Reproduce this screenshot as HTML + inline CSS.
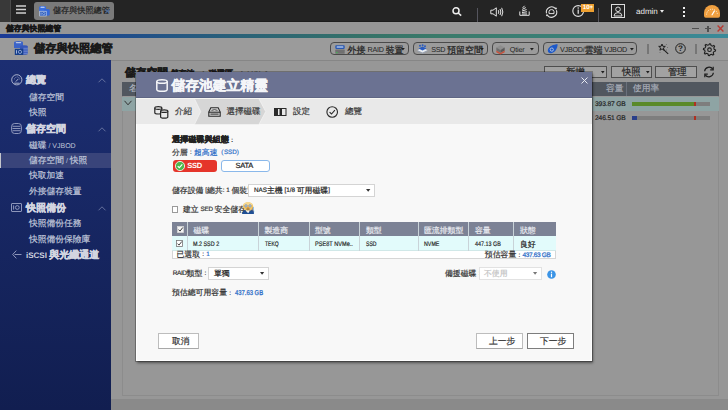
<!DOCTYPE html>
<html><head><meta charset="utf-8">
<style>
*{box-sizing:border-box;margin:0;padding:0}
html,body{width:728px;height:410px;overflow:hidden;background:#979797}
body{position:relative;text-rendering:geometricPrecision;font-family:"Liberation Sans",sans-serif;font-size:7px;color:#222;line-height:1}
.a{position:absolute}
.k{font-size:1.25em;line-height:0;position:relative;top:.07em;-webkit-text-stroke:.2px currentColor}
[style*="font-size:6.3px"],[style*="font-size:6.6px"],[style*="font-size:6.7px"]{-webkit-text-stroke:.18px currentColor}
[style*="bold"] .k,.sh .k{-webkit-text-stroke:.4px currentColor}
.p{padding:0 .36em}
.pl{padding-left:.6em;padding-right:.07em}
svg{position:absolute;overflow:visible}
/* top bar */
#top{left:0;top:0;width:728px;height:22px;background:#242424;border-bottom:1px solid #1c1c1c}
#topl{left:0;top:0;width:10.5px;height:22px;background:#393939;border-right:1px solid #4c4c4c}
#tab{left:34px;top:2px;width:79.5px;height:18px;background:#7a7a7a;border-radius:3px}
#win{left:0;top:22px;width:728px;height:12px;background:#969696}
#line{left:0;top:34px;width:728px;height:4px;background:linear-gradient(90deg,#1a3a96 0%,#1f4c8c 16%,#2a6278 33%,#357268 50%,#3a7a6a 60%,#3a8078 78%,#3a8a9a 100%)}
#hdr{left:0;top:38px;width:728px;height:22px;background:#9b9b9b}
#side{left:0;top:60px;width:111px;height:350px;background:linear-gradient(#1c2e72,#111e50)}
#foot{left:111px;top:399px;width:617px;height:11px;background:#8a8a8a}
.btn{border:1px solid #4a4a4a;border-radius:4px;height:12.9px}
.sb{color:#bfc4d8;font-size:7px}
.sh{color:#d2d5e0;font-size:8px;font-weight:bold}
</style></head><body>
<div id="top" class="a"></div>
<div id="topl" class="a"></div>
<svg style="left:16px;top:4px" width="10" height="11" viewBox="0 0 10 11" stroke="#cfcfcf" stroke-width="1.5"><path d="M0 2 H10 M0 5.5 H10 M0 9 H10"/></svg>
<div id="tab" class="a"></div>
<svg style="left:38.5px;top:5.5px" width="11" height="10" viewBox="0 0 14 13">
 <path d="M0 1.5 Q0 0 4.5 0 Q9 0 9 1.5 V7 H0Z" fill="#3a6fe0"/>
 <rect x="1.8" y="1" width="5.4" height="1.4" rx=".7" fill="#d6e2fa"/>
 <path d="M6 5 Q6 3.8 10 3.8 Q13.8 3.8 13.8 5 V11.8 Q13.8 12.8 10 12.8 Q6 12.8 6 11.8Z" fill="#3468d8"/>
 <rect x="0.8" y="6.8" width="8.4" height="6.2" fill="#2456b8" stroke="#d8e0f0" stroke-width=".8"/>
 <rect x="2" y="8.3" width="1" height="3.2" fill="#c0d0f0"/>
 <circle cx="6" cy="9.9" r="1.5" fill="none" stroke="#c0d0f0" stroke-width=".8"/>
</svg>
<div class="a" style="left:53px;top:8px;font-size:6.5px;color:#1e1e1e"><span class="k">儲存與快照總管</span></div>
<svg style="left:105px;top:9px" width="4.5" height="4.5" viewBox="0 0 4.5 4.5" stroke="#4a6a9c" stroke-width="1.1"><path d="M.3 .3 L4.2 4.2 M4.2 .3 L.3 4.2"/></svg>

<div id="win" class="a"></div>
<div class="a" style="left:6px;top:26px;font-size:6.3px;font-weight:bold;color:#161616"><span class="k">儲存與快照總管</span></div>
<div id="line" class="a"></div>
<div id="hdr" class="a"></div>
<div class="a" style="left:34px;top:44px;font-size:9px;font-weight:bold;color:#1a1a1a"><span class="k">儲存與快照總管</span></div>


<!-- header icon -->
<svg style="left:14px;top:41px" width="14" height="14" viewBox="0 0 14 14">
 <path d="M0 1.5 Q0 0 4.5 0 Q9 0 9 1.5 V7 H0Z" fill="#3b63c8"/>
 <rect x="1.8" y="1" width="5.4" height="1.2" rx=".6" fill="#b9c6e6"/>
 <path d="M6 5.5 Q6 4.3 10 4.3 Q13.8 4.3 13.8 5.5 V12.8 Q13.8 13.8 10 13.8 Q6 13.8 6 12.8Z" fill="#3556b8"/>
 <path d="M9.3 7.3 H13.8 M9.3 9 H13.8 M9.3 10.7 H13.8 M9.3 12.4 H13.8" stroke="#8fa4dc" stroke-width=".6"/>
 <rect x="0.8" y="7.8" width="8.4" height="6.2" fill="#173f8a"/>
 <rect x="2" y="9.2" width="1" height="3.4" fill="#9fb2dd"/>
 <circle cx="6" cy="10.9" r="1.6" fill="none" stroke="#9fb2dd" stroke-width=".8"/>
</svg>

<!-- header buttons -->
<div class="a btn" style="left:330.3px;top:42.3px;width:78.3px"></div>
<svg style="left:335px;top:44.5px" width="10" height="9" viewBox="0 0 10 9"><rect x="0.3" y="0.3" width="9.4" height="3.6" rx=".8" fill="#2a58b0"/><rect x="1.6" y="1.3" width="6.8" height="1.4" rx=".5" fill="#a8c0ea"/><rect x="0.3" y="4.6" width="9.4" height="4.2" rx=".6" fill="#707070"/><rect x="1" y="7.2" width="1.6" height=".9" fill="#3cc050"/></svg>
<div class="a" style="left:347.6px;top:46.3px;font-size:7.2px;color:#1e1e1e"><span><span class="k">外接</span></span> <span style="letter-spacing:-.3px">RAID</span> <span><span class="k">裝置</span></span></div>
<svg style="left:400.8px;top:48px" width="4" height="2.5" viewBox="0 0 4 2.5"><path d="M0 0 H3.8 L1.9 2.4Z" fill="#1e1e1e"/></svg>

<div class="a btn" style="left:413.1px;top:42.3px;width:74.5px"></div>
<svg style="left:417px;top:44px" width="11" height="10" viewBox="0 0 11 10"><path d="M.5 6.3 L5.5 3.8 L10.5 6.3 L5.5 8.8Z" fill="#e8ecf2"/><path d="M.5 6.3 V7.3 L5.5 9.8 L10.5 7.3 V6.3 L5.5 8.8Z" fill="#9aa4b4"/><path d="M1.5 4.6 L5.5 2.6 L9.5 4.6 L5.5 6.6Z" fill="#2a5cc0"/><circle cx="3" cy="1.8" r="1" fill="#2a5cc0"/><circle cx="5.6" cy="1.2" r="1" fill="#2a5cc0"/><circle cx="8" cy="2.2" r="1" fill="#2a5cc0"/></svg>
<div class="a" style="left:431.2px;top:46.3px;font-size:7.2px;color:#1e1e1e"><span style="letter-spacing:-.3px">SSD</span> <span class="k">預留空間</span></div>
<svg style="left:480.2px;top:48px" width="4" height="2.5" viewBox="0 0 4 2.5"><path d="M0 0 H3.8 L1.9 2.4Z" fill="#1e1e1e"/></svg>

<div class="a btn" style="left:492.4px;top:42.3px;width:46.6px"></div>
<svg style="left:496.2px;top:45px" width="9" height="10" viewBox="0 0 9 10"><path d="M4.5 .3 L8.7 2.6 L4.5 4.9 L.3 2.6Z" fill="#8e8e8e"/><path d="M.3 2.6 V5.6 L4.5 7.9 V4.9Z" fill="#6e6e6e"/><path d="M8.7 2.6 V5.6 L4.5 7.9 V4.9Z" fill="#5a5a5a"/><path d="M.3 5.6 V7.2 L4.5 9.5 L8.7 7.2 V5.6 L4.5 7.9Z" fill="#c8503a"/></svg>
<div class="a" style="left:509.8px;top:46.3px;font-size:7.2px;color:#1e1e1e;letter-spacing:-.2px">Qtier</div>
<svg style="left:529.9px;top:48px" width="4" height="2.5" viewBox="0 0 4 2.5"><path d="M0 0 H3.8 L1.9 2.4Z" fill="#1e1e1e"/></svg>

<div class="a btn" style="left:542.6px;top:42.3px;width:94px"></div>
<svg style="left:546.5px;top:44px" width="11" height="9.5" viewBox="0 0 11 9.5"><path d="M10.6 .2 C7 .2 1.2 2.2 .8 6.2 C.6 8.4 2.4 9.4 4.2 9.2 C8.2 8.6 10.6 4 10.6 .2Z" fill="#1d58c8"/><circle cx="4.8" cy="5.6" r="1.6" fill="none" stroke="#a9bde0" stroke-width="1"/></svg>
<div class="a" style="left:560px;top:46.3px;font-size:7.2px;color:#1e1e1e;letter-spacing:-.25px">VJBOD/<span style="letter-spacing:0"><span class="k">雲端</span></span> VJBOD</div>
<svg style="left:629.6px;top:48px" width="4" height="2.5" viewBox="0 0 4 2.5"><path d="M0 0 H3.8 L1.9 2.4Z" fill="#1e1e1e"/></svg>
<div class="a" style="left:647.3px;top:44px;width:1.3px;height:9.5px;background:#767676"></div>
<svg style="left:657px;top:43px" width="13" height="12" viewBox="0 0 13 12"><path d="M5 1 L5.9 3.3 L8.3 3.4 L6.4 4.9 L7.1 7.2 L5 5.9 L2.9 7.2 L3.6 4.9 L1.7 3.4 L4.1 3.3Z" fill="none" stroke="#1e1e1e" stroke-width="1"/><path d="M6.3 6.3 L11.2 10.8" stroke="#1e1e1e" stroke-width="1.1"/><circle cx="9.3" cy="1.6" r=".45" fill="#333"/><circle cx="10.6" cy="4.4" r=".45" fill="#333"/><circle cx="3" cy="9.6" r=".45" fill="#333"/><circle cx="9.6" cy="7" r=".4" fill="#333"/></svg>
<svg style="left:675px;top:43px" width="11" height="11" viewBox="0 0 11 11"><circle cx="5.5" cy="5.5" r="4.8" fill="none" stroke="#1e1e1e" stroke-width="1"/><text x="5.5" y="8.4" font-size="8" font-family="Liberation Sans" font-weight="bold" text-anchor="middle" fill="#1e1e1e">?</text></svg>
<div class="a" style="left:695.3px;top:44px;width:1.3px;height:9.5px;background:#767676"></div>
<svg style="left:703px;top:42.5px" width="13" height="13" viewBox="0 0 13 13" fill="none" stroke="#1e1e1e" stroke-width="1.1"><path d="M6.5 0.8 L7.6 0.9 L8 2.5 L9.3 3.2 L10.8 2.5 L11.6 3.4 L10.8 4.9 L11.2 6.3 L12.6 7 L12.4 8.1 L10.9 8.6 L10.2 9.9 L10.8 11.4 L9.9 12.1 L8.5 11.3 L7.1 11.8 L6.5 12.6 L5.4 12.5 L5 11 L3.6 10.3 L2.1 11 L1.4 10.1 L2.1 8.6 L1.7 7.2 L0.4 6.5 L0.6 5.4 L2.1 4.9 L2.8 3.6 L2.1 2.1 L3 1.4 L4.5 2.2 L5.9 1.7Z"/><circle cx="6.5" cy="6.7" r="1.8"/></svg>

<!-- top bar right icons -->
<svg style="left:452px;top:7px" width="10" height="9" viewBox="0 0 10 9" fill="none" stroke="#eee" stroke-width="1.5"><circle cx="4" cy="3.8" r="3"/><path d="M6.2 6 L9.2 8.6"/></svg>
<div class="a" style="left:476.5px;top:7.5px;width:1.4px;height:14.5px;background:#55555e"></div>
<svg style="left:490px;top:6.5px" width="14" height="10" viewBox="0 0 14 10" fill="none" stroke="#e6e6e6" stroke-width="1"><path d="M0.8 3.2 H3 L6.3 0.8 V9.2 L3 6.8 H0.8Z"/><path d="M8.3 3.2 Q9.3 5 8.3 6.8 M10 2 Q11.7 5 10 8 M11.7 0.8 Q14 5 11.7 9.2"/></svg>
<svg style="left:519px;top:5px" width="11" height="11" viewBox="0 0 11 11" fill="none" stroke="#e6e6e6" stroke-width="1"><path d="M0.8 6.5 V10.3 H10.2 V6.5"/><path d="M3 9 H8 M3 7.5 L8 6.8 M3 6 L7.6 4.6 M3.2 4.4 L6.8 2.6 M3.6 2.9 L5.6 0.8"/></svg>
<svg style="left:544.5px;top:6px" width="13" height="12" viewBox="0 0 13 12" fill="none" stroke="#e0e0e0" stroke-width="1.1"><path d="M10.5 2.7 A5.2 5.2 0 0 0 1.5 7.3 M2.5 9.3 A5.2 5.2 0 0 0 11.4 4.2"/><circle cx="10.9" cy="2.6" r="1" fill="#e0e0e0" stroke="none"/><circle cx="2" cy="9.2" r="1" fill="#e0e0e0" stroke="none"/><path d="M4 7.6 H9 V5.6 Q9 3.6 6.5 3.6 Q4 3.6 4 5.6Z" stroke-width="1"/></svg>
<svg style="left:572px;top:5px" width="13" height="12" viewBox="0 0 13 12"><circle cx="6.2" cy="6" r="5.4" fill="none" stroke="#e0e0e0" stroke-width="1.1"/><rect x="5.6" y="4.6" width="1.2" height="4.2" fill="#e6e6e6"/><circle cx="6.2" cy="3.1" r=".75" fill="#e6e6e6"/></svg>
<div class="a" style="left:581.3px;top:4.3px;width:12.6px;height:7.8px;background:#eea030"></div>
<div class="a" style="left:582.8px;top:4.9px;font-size:6.2px;font-weight:bold;color:#fff;letter-spacing:-.1px">10+</div>
<div class="a" style="left:598px;top:7.5px;width:1.4px;height:14.5px;background:#55555e"></div>
<svg style="left:611px;top:4px" width="14" height="14" viewBox="0 0 14 14" fill="none" stroke="#dcdcdc" stroke-width="1"><rect x=".5" y=".5" width="13" height="13"/><circle cx="7" cy="5.3" r="2.3"/><path d="M3 12 Q3 8.6 7 8.6 Q11 8.6 11 12Z"/></svg>
<div class="a" style="left:636px;top:7.5px;font-size:8px;color:#ececec">admin</div>
<svg style="left:659.7px;top:10.2px" width="4" height="3" viewBox="0 0 4 3"><path d="M0 0 H4 L2 2.8Z" fill="#ececec"/></svg>
<div class="a" style="left:683px;top:6.5px;width:2px;height:2px;background:#eee"></div>
<div class="a" style="left:683px;top:10.5px;width:2px;height:2px;background:#eee"></div>
<div class="a" style="left:683px;top:14.5px;width:2px;height:2px;background:#eee"></div>
<svg style="left:703.5px;top:5px" width="16" height="13" viewBox="0 0 16 13"><path d="M0 8 A8 8 0 0 1 16 8 V10.8 Q16 12.7 14.2 12.7 H1.8 Q0 12.7 0 10.8Z" fill="#f0a040"/><path d="M2.6 9.6 A5.4 5.4 0 0 1 13.4 9.6" fill="none" stroke="#fff3e0" stroke-width="1" stroke-dasharray="1 1.1"/><path d="M7.8 10.2 L10.6 5.6" stroke="#fff" stroke-width="1.1"/></svg>

<!-- window controls -->
<div class="a" style="left:692px;top:28px;width:6.5px;height:1.3px;background:#505050"></div>
<div class="a" style="left:705px;top:28px;width:6px;height:1.3px;background:#505050"></div>
<div class="a" style="left:707.4px;top:25.6px;width:1.3px;height:6px;background:#505050"></div>
<svg style="left:717px;top:25px" width="7" height="7" viewBox="0 0 7 7" stroke="#b83a32" stroke-width="1.4"><path d="M.6 .6 L6.4 6.4 M6.4 .6 L.6 6.4"/></svg>

<div id="side" class="a"></div>
<div id="foot" class="a"></div>
<div class="a" style="left:111px;top:60px;width:617px;height:1px;background:#868686"></div>

<!-- sidebar -->
<svg style="left:10.5px;top:74px" width="12" height="12" viewBox="0 0 12 12" fill="none" stroke="#b9bfd6" stroke-width=".9"><circle cx="5.8" cy="5.8" r="5.1"/><path d="M3 4.6 L3.6 4.9 M4.4 3.1 L4.8 3.6 M6.2 2.6 V3.2 M8 3.2 L7.6 3.7 M9.1 4.7 L8.5 5 M4.8 7.6 L7.4 4.8"/><path d="M3.2 9.2 H8.4"/></svg>
<div class="a sh" style="left:26px;top:76.2px"><span class="k">總覽</span></div>
<svg style="left:97.5px;top:78px" width="8" height="5" viewBox="0 0 8 5" fill="none" stroke="#6d78a4" stroke-width=".9"><path d="M.5 4.3 L4 .8 L7.5 4.3"/></svg>
<div class="a sb" style="left:29px;top:94.7px"><span class="k">儲存空間</span></div>
<div class="a sb" style="left:29px;top:109.7px"><span class="k">快照</span></div>
<svg style="left:10.5px;top:123px" width="11" height="11" viewBox="0 0 11 11" fill="none" stroke="#9ba3c4" stroke-width=".9"><rect x=".6" y=".5" width="9.8" height="10" rx="3"/><path d="M1.5 3.3 H9.5 M1.5 5.5 H9.5 M1.5 7.7 H9.5"/></svg>
<div class="a sh" style="left:26px;top:125.7px"><span class="k">儲存空間</span></div>
<svg style="left:97.5px;top:127px" width="8" height="5" viewBox="0 0 8 5" fill="none" stroke="#6d78a4" stroke-width=".9"><path d="M.5 4.3 L4 .8 L7.5 4.3"/></svg>
<div class="a sb" style="left:29px;top:142.7px"><span class="k">磁碟</span> / VJBOD</div>
<div class="a" style="left:0;top:152.6px;width:111px;height:15.2px;background:#39447a"></div>
<div class="a" style="left:0;top:152.6px;width:1.3px;height:15.2px;background:#c4c6cc"></div>
<div class="a sb" style="left:29px;top:157.7px"><span class="k">儲存空間</span> / <span class="k">快照</span></div>
<div class="a sb" style="left:29px;top:172.7px"><span class="k">快取加速</span></div>
<div class="a sb" style="left:29px;top:188.2px"><span class="k">外接儲存裝置</span></div>
<svg style="left:11px;top:203px" width="11" height="9" viewBox="0 0 11 9" fill="none" stroke="#9ba3c4" stroke-width=".9"><rect x=".5" y=".5" width="10" height="8" rx=".5"/><path d="M2.6 2.4 V6.6"/><circle cx="6.3" cy="4.5" r="1.9"/></svg>
<div class="a sh" style="left:26px;top:204.7px"><span class="k">快照備份</span></div>
<svg style="left:97.5px;top:205.5px" width="8" height="5" viewBox="0 0 8 5" fill="none" stroke="#6d78a4" stroke-width=".9"><path d="M.5 4.3 L4 .8 L7.5 4.3"/></svg>
<div class="a sb" style="left:29px;top:220.7px"><span class="k">快照備份任務</span></div>
<div class="a sb" style="left:29px;top:236.2px"><span class="k">快照備份保險庫</span></div>
<svg style="left:12px;top:250px" width="10" height="9" viewBox="0 0 10 9" fill="none" stroke="#9ba3c4" stroke-width=".9"><path d="M4.3 .6 L.7 4.5 L4.3 8.4 M2.6 4.5 H9.5"/></svg>
<div class="a sh" style="left:26px;top:251.7px">iSCSI <span class="k">與光纖通道</span></div>

<!-- content background -->
<div class="a" style="left:121.5px;top:82px;width:597.5px;height:314px;border:1px solid #8c8c8c"></div>
<div class="a" style="left:125px;top:68.5px;font-size:8.6px;font-weight:bold;color:#1a1a1a"><span class="k">儲存空間</span> <span style="font-size:6.5px"><span class="k">儲存池</span><span class="p">:</span>1, <span class="k">磁碟區</span><span class="p">:</span>1, LUN: 0</span></div>
<div class="a" style="left:544px;top:66px;width:63px;height:12px;border:1px solid #4e4e4e;background:#a2a2a2"></div>
<div class="a" style="left:566px;top:68px;font-size:7.5px;color:#1e1e1e"><span class="k">新增</span></div>
<svg style="left:600.5px;top:70.8px" width="3.6" height="2.4" viewBox="0 0 3.6 2.4"><path d="M0 0 H3.6 L1.8 2.4Z" fill="#1e1e1e"/></svg>
<div class="a" style="left:611px;top:66px;width:41px;height:12px;border:1px solid #4e4e4e;background:#a2a2a2"></div>
<div class="a" style="left:622px;top:68px;font-size:7.5px;color:#1e1e1e"><span class="k">快照</span></div>
<svg style="left:645.5px;top:70.8px" width="3.6" height="2.4" viewBox="0 0 3.6 2.4"><path d="M0 0 H3.6 L1.8 2.4Z" fill="#1e1e1e"/></svg>
<div class="a" style="left:655px;top:66px;width:42px;height:12px;border:1px solid #4e4e4e;background:#a2a2a2"></div>
<div class="a" style="left:668px;top:68px;font-size:7.5px;color:#1e1e1e"><span class="k">管理</span></div>
<svg style="left:702.5px;top:66px" width="12" height="12" viewBox="0 0 12 12" fill="none" stroke="#1e1e1e" stroke-width="1.2"><path d="M1.6 5.2 A4.5 4.5 0 0 1 9.8 3.2 M10.4 6.8 A4.5 4.5 0 0 1 2.2 8.8"/><path d="M10.2 .8 V3.8 H7.2 M1.8 11.2 V8.2 H4.8"/></svg>

<div class="a" style="left:122px;top:82.3px;width:596.5px;height:14.2px;background:#51575f"></div>
<div class="a" style="left:129px;top:86px;font-size:6.8px;color:#b0b4be"><span class="k">名稱</span>/<span class="k">別名</span></div>
<div class="a" style="left:606px;top:85px;font-size:7px;color:#a8adb8"><span class="k">容量</span></div>
<div class="a" style="left:626px;top:82px;width:1px;height:14px;background:#6a707c"></div>
<div class="a" style="left:633px;top:85px;font-size:7px;color:#a8adb8"><span class="k">使用率</span></div>
<div class="a" style="left:122px;top:96.5px;width:596.5px;height:14px;background:#8ea4a4"></div>
<svg style="left:124px;top:100px" width="8" height="6" viewBox="0 0 8 6" fill="none" stroke="#333" stroke-width="1"><path d="M.5 .8 L4 4.8 L7.5 .8"/></svg>
<div class="a" style="left:595px;top:102px;font-size:6.7px;color:#1e1e1e;letter-spacing:-.15px">393.87 GB</div>
<div class="a" style="left:632px;top:102px;width:78px;height:4px;background:#7e7e7e"></div>
<div class="a" style="left:632px;top:102px;width:62px;height:4px;background:#5a8a2a"></div>
<div class="a" style="left:694px;top:102px;width:1.5px;height:4px;background:#b03020"></div>
<div class="a" style="left:595px;top:115.5px;font-size:6.7px;color:#1e1e1e;letter-spacing:-.15px">246.51 GB</div>
<div class="a" style="left:632px;top:115.5px;width:78px;height:4px;background:#7e7e7e"></div>
<div class="a" style="left:632px;top:115.5px;width:5px;height:4px;background:#2a3f8a"></div>
<div class="a" style="left:694px;top:115.5px;width:1.5px;height:4px;background:#b03020"></div>


<!-- dialog -->
<div class="a" style="left:136px;top:72px;width:455.5px;height:288.5px;background:#f8f8f8;box-shadow:inset 0 0 0 1px #fff,0 0 0 1px rgba(0,0,0,.25),1px 1.5px 2.5px rgba(0,0,0,.45)"></div>
<div class="a" style="left:136px;top:72px;width:455.5px;height:26px;background:#6b7292"></div>
<svg style="left:155.5px;top:79px" width="12" height="13" viewBox="0 0 12 13" fill="none" stroke="#f4f5f8" stroke-width="1.5"><path d="M.8 2.5 Q.8 .7 6 .7 Q11.2 .7 11.2 2.5 V10.5 Q11.2 12.3 6 12.3 Q.8 12.3 .8 10.5Z"/><path d="M.8 2.5 Q.8 4.3 6 4.3 Q11.2 4.3 11.2 2.5"/></svg>
<div class="a" style="left:171.5px;top:81.2px;font-size:11px;font-weight:bold;color:#f4f5f8"><span class="k">儲存池建立精靈</span></div>
<svg style="left:580.5px;top:77px" width="7" height="7" viewBox="0 0 7 7" stroke="#e8eaf0" stroke-width="1"><path d="M.5 .5 L6.5 6.5 M6.5 .5 L.5 6.5"/></svg>

<div class="a" style="left:136px;top:98px;width:455.5px;height:26.2px;background:#e9e9e9;border-top:1px solid #f6f6f2"></div>
<div class="a" style="left:136px;top:97px;width:455.5px;height:1px;background:#5f6684"></div>
<svg style="left:136px;top:99px" width="455" height="25.2" viewBox="0 0 455 25.2"><path d="M58.5 0 L64.6 12.6 L58.5 25.2 H123 L129.7 12.6 L123 0Z" fill="#d6d6d6"/><path d="M58.5 0 L64.6 12.6 L58.5 25.2 M123 0 L129.7 12.6 L123 25.2" fill="none" stroke="#f2f2f2" stroke-width=".8"/></svg>
<svg style="left:154.3px;top:105.5px" width="15" height="13" viewBox="0 0 15 13" fill="#e9e9e9" stroke="#262626" stroke-width="1.2"><path d="M.8 2 Q.8 .7 4.3 .7 Q7.8 .7 7.8 2 V6.8 Q7.8 8 4.3 8 Q.8 8 .8 6.8Z"/><path d="M.8 2.2 Q.8 3.3 4.3 3.3 Q7.8 3.3 7.8 2.2" fill="none"/><path d="M6.6 5 Q6.6 3.8 10.2 3.8 Q13.8 3.8 13.8 5 V10.9 Q13.8 12.1 10.2 12.1 Q6.6 12.1 6.6 10.9Z"/><path d="M6.6 5.2 Q6.6 6.4 10.2 6.4 Q13.8 6.4 13.8 5.2" fill="none"/></svg>
<div class="a" style="left:175px;top:109.3px;font-size:6.8px;color:#3a3a3a"><span class="k">介紹</span></div>
<svg style="left:208px;top:107px" width="13" height="10" viewBox="0 0 13 10" fill="none" stroke="#2a2a2a" stroke-width="1.1"><path d="M.8 5 L2.8 .8 H10.2 L12.2 5 V9.2 H.8Z"/><path d="M.8 5.2 H12.2"/><path d="M3.5 3.4 Q6.5 1.8 9.5 3.4" stroke-width=".8"/><rect x="2.4" y="6.6" width="8.2" height="1" fill="#2a2a2a" stroke="none"/></svg>
<div class="a" style="left:226.5px;top:109.3px;font-size:6.8px;color:#3a3a3a"><span class="k">選擇磁碟</span></div>
<svg style="left:273.5px;top:108px" width="13" height="8" viewBox="0 0 13 8"><rect x=".5" y=".5" width="11.5" height="7" fill="none" stroke="#2a2a2a" stroke-width="1"/><rect x=".5" y=".5" width="3.5" height="7" fill="#2a2a2a"/><rect x="5.5" y=".5" width="2.5" height="7" fill="#2a2a2a"/></svg>
<div class="a" style="left:293px;top:109.3px;font-size:6.8px;color:#3a3a3a"><span class="k">設定</span></div>
<svg style="left:326px;top:105.5px" width="13" height="12" viewBox="0 0 13 12" fill="none" stroke="#2a2a2a" stroke-width="1.1"><circle cx="6.2" cy="6" r="5.3"/><path d="M3.6 6.1 L5.5 8 L8.9 4.2"/></svg>
<div class="a" style="left:345px;top:109.3px;font-size:6.8px;color:#3a3a3a"><span class="k">總覽</span></div>


<!-- dialog body -->
<div class="a" style="left:172px;top:137.5px;font-size:6.5px;font-weight:bold;color:#222"><span class="k">選擇磁碟與組態</span><span class="p">:</span></div>
<div class="a" style="left:172px;top:150px;font-size:6.3px;color:#444"><span class="k">分層</span><span class="p">:</span><span style="color:#2f6fc8"><span class="k">超高速</span><span class="pl">(</span>SSD)</span></div>
<div class="a" style="left:172.5px;top:159.5px;width:44px;height:12.5px;background:#e5352b;border-radius:3px"></div>
<svg style="left:175px;top:160.6px" width="11" height="11" viewBox="0 0 11 11"><circle cx="5" cy="5" r="4.6" fill="#4cb84c" stroke="#fff" stroke-width=".8"/><path d="M2.7 5.1 L4.3 6.7 L7.3 3.4" fill="none" stroke="#fff" stroke-width="1.1"/></svg>
<div class="a" style="left:187.3px;top:162.2px;font-size:7.5px;font-weight:bold;color:#fff;letter-spacing:-.3px">SSD</div>
<div class="a" style="left:221px;top:159.5px;width:48.5px;height:12.5px;background:#fff;border:1px solid #8ab8ea;border-radius:3px"></div>
<div class="a" style="left:235.6px;top:162.2px;font-size:7.5px;color:#222;letter-spacing:-.25px;-webkit-text-stroke:.2px #222">SATA</div>

<div class="a" style="left:172px;top:188px;font-size:6.3px;color:#333"><span class="k">儲存設備</span> [<span class="k">總共</span>: 1 <span class="k">個裝置</span>]:</div>
<div class="a" style="left:248px;top:184px;width:127px;height:13px;background:#fff;border:1px solid #d4d4d4"></div>
<div class="a" style="left:254px;top:188px;font-size:6.3px;color:#222">NAS<span class="k">主機</span> [1/8 <span class="k">可用磁碟</span>]</div>
<svg style="left:366px;top:189.3px" width="4.4" height="2.8" viewBox="0 0 4.4 2.8"><path d="M0 0 H4.4 L2.2 2.8Z" fill="#333"/></svg>

<div class="a" style="left:171.7px;top:206.3px;width:6.3px;height:6.3px;border:1px solid #9a9a9a;background:#fff"></div>
<div class="a" style="left:183px;top:207.3px;font-size:6.3px;color:#333"><span class="k">建立</span> <span style="letter-spacing:-.2px">SED</span> <span class="k">安全儲存池</span></div>
<svg style="left:242.3px;top:202px" width="12" height="12" viewBox="0 0 12 12"><path d="M0 11.9 Q.3 8.6 3 8.2 L6 11 L9 8.2 Q11.7 8.6 12 11.9Z" fill="#1f4f94"/><path d="M4.2 8.4 L6 11 L7.8 8.4Z" fill="#f4f4f4"/><ellipse cx="6" cy="4.3" rx="5.2" ry="4.1" fill="#f2c462"/><path d="M1.2 3.2 Q2 .2 6 .2 Q10 .2 10.8 3.2Z" fill="#f6d890"/><circle cx="4" cy="3.9" r="1.3" fill="#aebccc" stroke="#7a8aa0" stroke-width=".5"/><circle cx="8" cy="3.9" r="1.3" fill="#aebccc" stroke="#7a8aa0" stroke-width=".5"/><path d="M5 5.2 H7 L6 6.8Z" fill="#e8801e"/><rect x="4.4" y="6.6" width="3.2" height=".9" fill="#6a5030"/></svg>

<!-- table -->
<div class="a" style="left:172px;top:222px;width:384px;height:37px;border:1px solid #d6d6d6;background:#fff"></div>
<div class="a" style="left:172px;top:222px;width:384px;height:14.3px;background:#7c8295"></div>
<div class="a" style="left:172px;top:236px;width:384px;height:15px;background:#e2fbfb;border-bottom:1px solid #d0e8e8"></div>
<div class="a" style="left:187px;top:222px;width:1px;height:29px;background:#c9d3d8"></div>
<div class="a" style="left:258px;top:222px;width:1px;height:29px;background:#c9d3d8"></div>
<div class="a" style="left:308.5px;top:222px;width:1px;height:29px;background:#c9d3d8"></div>
<div class="a" style="left:359px;top:222px;width:1px;height:29px;background:#c9d3d8"></div>
<div class="a" style="left:417.5px;top:222px;width:1px;height:29px;background:#c9d3d8"></div>
<div class="a" style="left:468px;top:222px;width:1px;height:29px;background:#c9d3d8"></div>
<div class="a" style="left:513px;top:222px;width:1px;height:29px;background:#c9d3d8"></div>
<svg style="left:176.5px;top:226px" width="7" height="7" viewBox="0 0 7 7"><rect x=".5" y=".5" width="6" height="6" fill="#f4f4f4" stroke="#d8d8d8" stroke-width=".8"/><path d="M1.5 3.6 L3 5.1 L5.8 1.5" fill="none" stroke="#333" stroke-width="1"/></svg>
<svg style="left:176px;top:240.2px" width="7" height="7" viewBox="0 0 7 7"><rect x=".5" y=".5" width="6" height="6" fill="#fff" stroke="#777" stroke-width=".8"/><path d="M1.5 3.6 L3 5.1 L5.8 1.5" fill="none" stroke="#444" stroke-width="1"/></svg>
<div class="a" style="left:193.5px;top:228.3px;font-size:6.3px;color:#e8eaf0"><span class="k">磁碟</span></div>
<div class="a" style="left:264.5px;top:228.3px;font-size:6.3px;color:#e8eaf0"><span class="k">製造商</span></div>
<div class="a" style="left:315px;top:228.3px;font-size:6.3px;color:#e8eaf0"><span class="k">型號</span></div>
<div class="a" style="left:366px;top:228.3px;font-size:6.3px;color:#e8eaf0"><span class="k">類型</span></div>
<div class="a" style="left:424px;top:228.3px;font-size:6.3px;color:#e8eaf0"><span class="k">匯流排類型</span></div>
<div class="a" style="left:475px;top:228.3px;font-size:6.3px;color:#e8eaf0"><span class="k">容量</span></div>
<div class="a" style="left:520px;top:228.3px;font-size:6.3px;color:#e8eaf0"><span class="k">狀態</span></div>
<div class="a" style="left:193px;top:241.6px;font-size:6.6px;color:#222;transform-origin:0 50%;transform:scaleX(0.82)">M.2 SSD 2</div>
<div class="a" style="left:264.5px;top:241.6px;font-size:6.6px;color:#222;transform-origin:0 50%;transform:scaleX(0.76)">TEKQ</div>
<div class="a" style="left:315px;top:241.6px;font-size:6.6px;color:#222;transform-origin:0 50%;transform:scaleX(0.85)">PSE8T NVMe..</div>
<div class="a" style="left:366px;top:241.6px;font-size:6.6px;color:#222;transform-origin:0 50%;transform:scaleX(0.78)">SSD</div>
<div class="a" style="left:424px;top:241.6px;font-size:6.6px;color:#222;transform-origin:0 50%;transform:scaleX(0.81)">NVME</div>
<div class="a" style="left:475px;top:241.6px;font-size:6.6px;color:#222;transform-origin:0 50%;transform:scaleX(0.82)">447.13 GB</div>
<div class="a" style="left:520px;top:242.2px;font-size:6.3px;color:#222"><span class="k">良好</span></div>
<div class="a" style="left:176.5px;top:252.3px;font-size:6.3px;color:#333"><span class="k">已選取</span><span class="p">:</span><span style="color:#2f6fc8">1</span></div>
<div class="a" style="left:440px;top:252.8px;width:110.5px;text-align:right;font-size:6.3px;color:#333"><span class="k">預估容量</span><span class="p">:</span><span style="color:#2f6fc8;font-size:6.5px;letter-spacing:-.35px;-webkit-text-stroke:.25px #2f6fc8">437.63 GB</span></div>

<div class="a" style="left:172.8px;top:271.3px;font-size:6.3px;color:#333"><span style="font-size:6.5px;letter-spacing:-.45px">RAID</span><span class="k">類型</span><span class="p">:</span></div>
<div class="a" style="left:208px;top:267px;width:61px;height:13px;background:#fff;border:1px solid #d4d4d4"></div>
<div class="a" style="left:214px;top:271.3px;font-size:6.3px;color:#222"><span class="k">單獨</span></div>
<svg style="left:260.4px;top:272.3px" width="4.2" height="2.7" viewBox="0 0 4.2 2.7"><path d="M0 0 H4.2 L2.1 2.7Z" fill="#333"/></svg>
<div class="a" style="left:445px;top:271.3px;font-size:6.3px;color:#333"><span class="k">備援磁碟</span><span class="p">:</span></div>
<div class="a" style="left:478.5px;top:267px;width:63px;height:13px;background:#fff;border:1px solid #e2e2e2"></div>
<div class="a" style="left:484px;top:271.3px;font-size:6.3px;color:#c4c4c4"><span class="k">不使用</span></div>
<svg style="left:533px;top:272.3px" width="4.2" height="2.7" viewBox="0 0 4.2 2.7"><path d="M0 0 H4.2 L2.1 2.7Z" fill="#777"/></svg>
<svg style="left:547px;top:269.8px" width="9" height="9" viewBox="0 0 9 9"><circle cx="4.5" cy="4.5" r="4.3" fill="#3b94e6"/><rect x="3.9" y="3.6" width="1.2" height="3.6" fill="#fff"/><circle cx="4.5" cy="2.3" r=".7" fill="#fff"/></svg>
<div class="a" style="left:172px;top:289.8px;font-size:6.3px;color:#333"><span class="k">預估總可用容量</span><span class="p">:</span><span style="display:inline-block;margin-left:2px;color:#2f6fc8;font-size:7px;transform:scaleX(.84);transform-origin:0 50%;-webkit-text-stroke:.3px #2f6fc8">437.63 GB</span></div>

<div class="a" style="left:158px;top:333px;width:41px;height:15.5px;background:#fff;border:1px solid #bdbdbd;border-bottom-color:#a8a8a8"></div>
<div class="a" style="left:172px;top:338.5px;font-size:7px;color:#333"><span class="k">取消</span></div>
<div class="a" style="left:476px;top:333px;width:46.5px;height:15.5px;background:#fff;border:1px solid #bdbdbd;border-bottom-color:#a8a8a8"></div>
<div class="a" style="left:489px;top:338.5px;font-size:7px;color:#333"><span class="k">上一步</span></div>
<div class="a" style="left:527px;top:333px;width:46.5px;height:15.5px;background:#fff;border:1px solid #7d7d7d"></div>
<div class="a" style="left:540px;top:338.5px;font-size:7px;color:#333"><span class="k">下一步</span></div>

</body></html>
